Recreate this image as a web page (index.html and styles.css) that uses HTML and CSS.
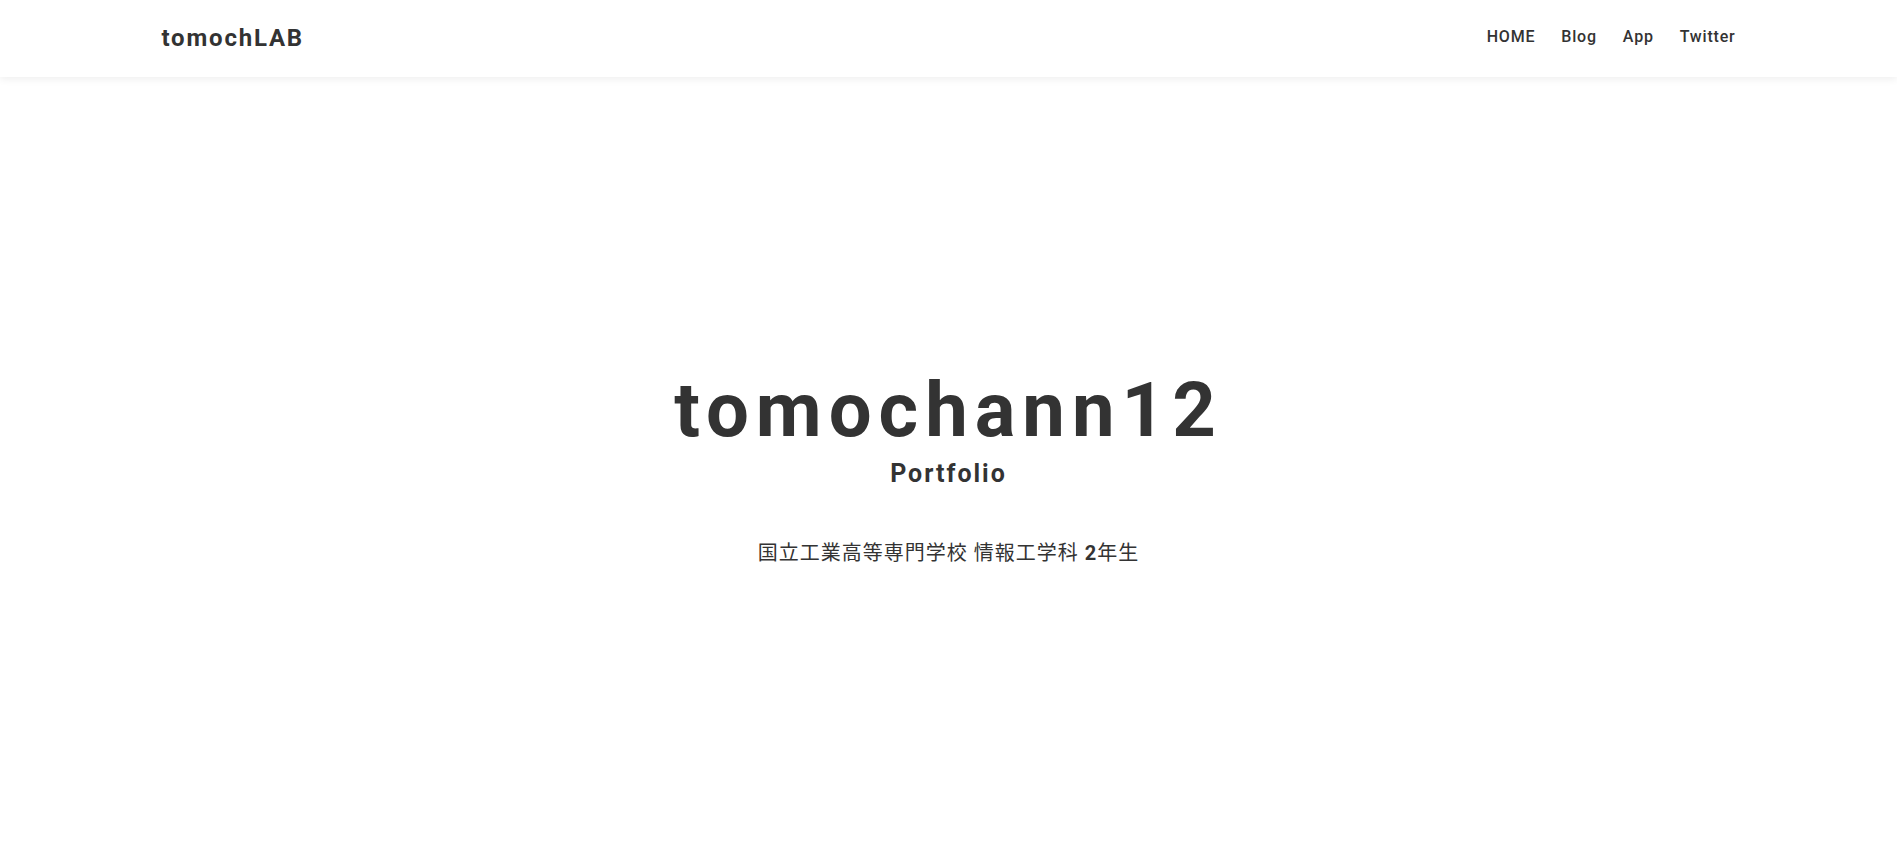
FILE: index.html
```html
<!DOCTYPE html>
<html lang="ja">
<head>
<meta charset="utf-8">
<title>tomochLAB</title>
<link rel="stylesheet" href="styles.css">
</head>
<body>
<header class="site-header">
  <div class="header-inner">
    <a class="logo" href="#">tomochLAB</a>
    <nav class="nav">
      <a href="#">HOME</a>
      <a href="#">Blog</a>
      <a href="#">App</a>
      <a href="#">Twitter</a>
    </nav>
  </div>
</header>
<main class="hero">
  <h1 class="hero-title">tomochann12</h1>
  <p class="hero-sub">Portfolio</p>
  <p class="hero-desc">国立工業高等専門学校 情報工学科 <b>2</b>年生</p>
</main>
</body>
</html>
```
FILE: styles.css
```css
* { box-sizing: border-box; }
html, body { margin: 0; padding: 0; }
body {
  font-family: Roboto, "Noto Sans CJK JP", sans-serif;
  color: #333;
  background: #fff;
  height: 842px;
  display: flex;
  flex-direction: column;
}
.site-header {
  height: 77px;
  background: #fff;
  box-shadow: 0 2px 8px rgba(0,0,0,0.07);
  position: relative;
  z-index: 1;
}
.header-inner {
  max-width: 1574px;
  margin: 0 auto;
  height: 100%;
  display: flex;
  align-items: center;
  justify-content: space-between;
}
.logo {
  font-size: 24px;
  font-weight: 700;
  letter-spacing: 1.8px;
  color: #333;
  text-decoration: none;
  padding-bottom: 2px;
}
.nav {
  display: flex;
  gap: 26px;
  padding-bottom: 4px;
}
.nav a {
  font-size: 16px;
  font-weight: 500;
  letter-spacing: 0.8px;
  color: #333;
  text-decoration: none;
}
.hero {
  flex: 1;
  display: flex;
  flex-direction: column;
  align-items: center;
  justify-content: center;
  padding-top: 20px;
}
.hero-title {
  margin: 0;
  font-size: 76px;
  font-weight: 700;
  letter-spacing: 7px;
  line-height: 1;
}
.hero-sub {
  margin: 10px 0 0;
  font-size: 25px;
  font-weight: 700;
  letter-spacing: 2px;
  line-height: 1.3;
}
.hero-desc {
  margin: 48px 0 0;
  font-size: 20px;
  letter-spacing: 1px;
  line-height: 1.4;
}
.hero-desc b { font-weight: 700; }
```
